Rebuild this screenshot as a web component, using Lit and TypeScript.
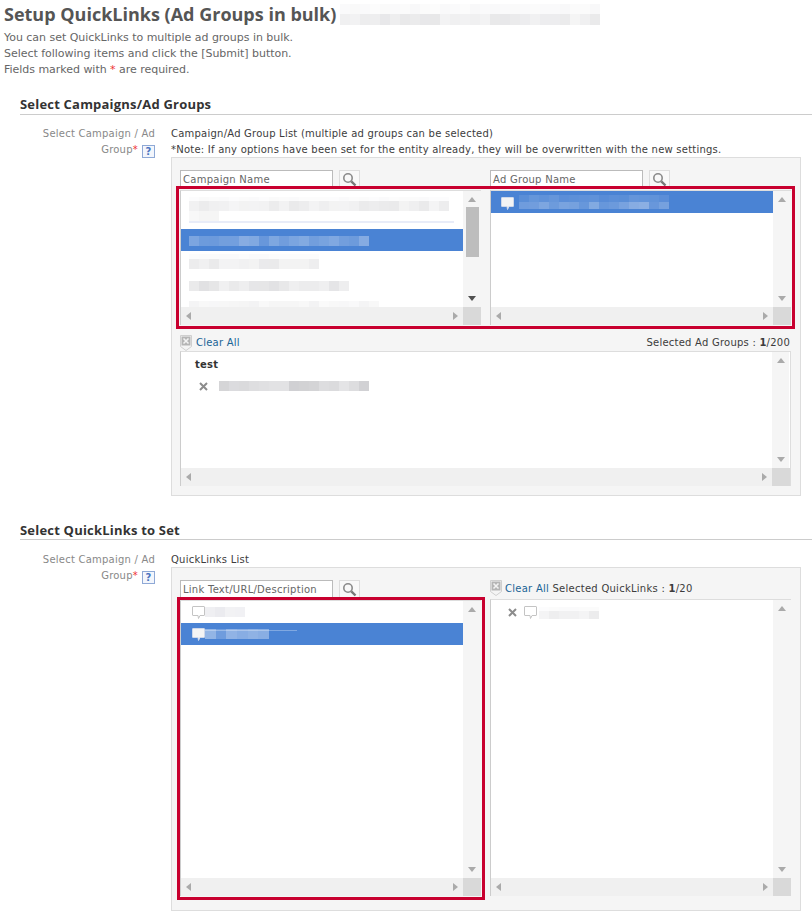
import { LitElement, html, css, svg, TemplateResult } from "lit";
import { customElement } from "lit/decorators.js";

type Row = [cells: number, strength: number, h: number];

function blur(rows: Row[], rgb = "90,90,100", seed = 1, cell = 10): TemplateResult {
  let s = seed * 97 + 13;
  const rnd = () => {
    s = (s * 9301 + 49297) % 233280;
    return s / 233280;
  };
  return html`<div class="blur">
    ${rows.map(
      ([n, k, h]) => html`<div class="blur-row" style="height:${h}px">
        ${Array.from({ length: n }, () => {
          const a = (k * (0.45 + 0.55 * rnd())).toFixed(3);
          return html`<i style="width:${cell}px;background:rgba(${rgb},${a})"></i>`;
        })}
      </div>`
    )}
  </div>`;
}

const WHITE = "255,255,255";

const arrow = (dir: "u" | "d" | "l" | "r", color = "#aaa") => {
  const pts = { u: "0,5 8,5 4,0", d: "0,0 8,0 4,5", l: "5,0 5,8 0,4", r: "0,0 0,8 5,4" }[dir];
  const vertical = dir === "u" || dir === "d";
  return html`<svg class="arrow" width=${vertical ? 8 : 5} height=${vertical ? 5 : 8} viewBox="0 0 ${vertical ? 8 : 5} ${vertical ? 5 : 8}">
    ${svg`<polygon points=${pts} fill=${color}></polygon>`}
  </svg>`;
};

const bubble = (on: boolean) => html`<svg class="bubble" width="13" height="13" viewBox="0 0 13 13">
  <path d="M1 .5h11a.5.5 0 0 1 .5.5v8a.5.5 0 0 1-.5.5H8L6.5 12.5 6 9.500H1a.5.5 0 0 1-.5-.5V1A.5.5 0 0 1 1 .5z"
    fill=${on ? "#f4f4f4" : "#fff"} stroke=${on ? "#cfd8ea" : "#c4c4c4"} stroke-width="1"></path>
</svg>`;

const cross = () => html`<svg class="cross" width="9" height="9" viewBox="0 0 9 9">
  <path d="M1 1l7 7M8 1L1 8" stroke="#8c8c8c" stroke-width="2" fill="none"></path>
</svg>`;

const shieldX = () => html`<svg class="shield" width="12" height="16" viewBox="0 0 12 16">
  <path d="M.5.5h11v11L6 15.500.5 11.500z" fill="#f4f4f4" stroke="#cfcfcf"></path>
  <rect x="1.500" y="1.500" width="9" height="9" fill="#b5b5b5"></rect>
  <path d="M3.500 3.500l5 5M8.500 3.500l-5 5" stroke="#f2f2f2" stroke-width="1.600" fill="none"></path>
</svg>`;

const magnifier = () => html`<svg width="15" height="15" viewBox="0 0 15 15">
  <circle cx="6" cy="6" r="4.200" fill="#f8f8f8" stroke="#8a8a8a" stroke-width="1.600"></circle>
  <path d="M9.300 9.300L13.500 13.500" stroke="#777" stroke-width="2.400" fill="none"></path>
</svg>`;

@customElement("app-root")
export class AppRoot extends LitElement {
  static styles = css`
    :host {
      display: block;
      width: 812px;
      height: 919px;
      overflow: hidden;
      background: #fff;
      font-family: "DejaVu Sans", sans-serif;
      font-size: 10px;
      letter-spacing: 0.23px;
      line-height: 16px;
      color: #3c3c3c;
    }
    h1 {
      margin: 0;
      padding-left: 4px;
      height: 29px;
      display: flex;
      align-items: center;
      gap: 4px;
      font: bold 18px/29px "Open Sans", sans-serif;
      letter-spacing: 0;
      color: #555;
      white-space: nowrap;
    }
    .intro {
      margin: 0;
      padding: 1px 0 0 4px;
      font-size: 11px;
      letter-spacing: -0.03px;
      color: #666;
    }
    .req {
      color: #e33;
    }
    h2 {
      margin: 19px 0 0 20px;
      height: 17px;
      border-bottom: 1px solid #ccc;
      font: bold 13px/15px "Open Sans", sans-serif;
      letter-spacing: 0.2px;
      color: #333;
    }
    h2.second {
      margin-top: 26px;
      padding-top: 1px;
      height: 16px;
    }
    .form-row {
      display: grid;
      grid-template-columns: 135px 630px;
      column-gap: 16px;
      margin: 11px 0 0 20px;
    }
    .form-row.second {
      margin-top: 12px;
    }
    .label {
      text-align: right;
      color: #888;
      padding-left: 10px;
    }
    .help {
      display: inline-flex;
      align-items: center;
      justify-content: center;
      box-sizing: border-box;
      width: 13px;
      height: 13px;
      margin-left: 4px;
      border: 1px solid #8fa9d6;
      background: #f3f6fc;
      color: #4a74c0;
      font: bold 10px/11px "DejaVu Sans", sans-serif;
      letter-spacing: 0;
      vertical-align: -2px;
    }
    .panel {
      position: relative;
      box-sizing: border-box;
      width: 630px;
      margin-top: -1px;
      border: 1px solid #ddd;
      background: #f5f5f5;
      padding: 12px 9px 9px 8px;
    }
    .panel.second {
      padding-bottom: 14px;
    }
    .columns {
      display: grid;
      grid-template-columns: 301px 301px;
      column-gap: 9px;
    }
    .search {
      display: flex;
      gap: 6px;
      height: 17px;
    }
    .search-input {
      box-sizing: border-box;
      width: 153px;
      height: 17px;
      border: 1px solid #bbb;
      border-bottom: none;
      background: #fff;
      padding-left: 2px;
      line-height: 17px;
      letter-spacing: 0.26px;
      color: #666;
      white-space: nowrap;
      overflow: hidden;
    }
    .search-btn {
      box-sizing: border-box;
      width: 21px;
      height: 17px;
      border: 1px solid #ddd;
      border-bottom: none;
      background: #f8f8f8;
      display: flex;
      align-items: center;
      justify-content: center;
    }
    .gap3 {
      margin-top: 3px;
    }
    .listbox {
      box-sizing: border-box;
      display: grid;
      grid-template-columns: 1fr 18px;
      grid-template-rows: 1fr 18px;
      border-top: 1px solid #ddd;
      border-left: 1px solid #ccc;
      background: #fff;
    }
    .h135 {
      height: 135px;
    }
    .h296 {
      height: 296px;
    }
    .h297 {
      height: 297px;
    }
    .list-body {
      overflow: hidden;
      min-width: 0;
      min-height: 0;
    }
    .vsb {
      position: relative;
      background: #f5f5f5;
      display: flex;
      flex-direction: column;
      align-items: center;
      justify-content: space-between;
      padding: 6px 0 6px;
    }
    .thumb {
      position: absolute;
      top: 16px;
      left: 3px;
      width: 13px;
      height: 50px;
      background: #bdbdbd;
    }
    .hsb {
      background: #f0f0f0;
      display: flex;
      align-items: center;
      justify-content: space-between;
      padding: 0 5px 0 5px;
    }
    .corner {
      background: #d9d9d9;
    }
    .item {
      display: flex;
      align-items: flex-start;
      padding-left: 8px;
      box-sizing: border-box;
    }
    .item.sel {
      background: #4a83d4;
      height: 22px;
    }
    .blur {
      display: flex;
      flex-direction: column;
    }
    .blur-row {
      display: flex;
    }
    .blur-row i {
      display: block;
      height: 100%;
    }
    .rule-light {
      height: 2px;
      width: 265px;
      margin-left: 8px;
      background: #e8ecf8;
    }
    .clear-row {
      display: flex;
      align-items: flex-start;
      justify-content: space-between;
      height: 16px;
      margin-top: 10px;
    }
    .clear-left {
      display: flex;
      align-items: flex-start;
      gap: 4px;
    }
    .link {
      color: #1a6496;
    }
    .shield {
      flex: none;
    }
    .count {
      padding-right: 1px;
    }
    .wide {
      width: 611px;
      border-right: 1px solid #ddd;
    }
    .wide .vsb {
      width: 17px;
    }
    .group-name {
      font-weight: bold;
      padding: 5px 0 0 14px;
      color: #333;
    }
    .sel-entry {
      display: flex;
      align-items: center;
      gap: 11px;
      padding: 8px 0 0 18px;
    }
    .ql-head {
      display: flex;
      align-items: flex-start;
      gap: 3px;
      height: 19px;
      line-height: 18px;
      letter-spacing: 0.26px;
    }
    .ql-item {
      display: flex;
      align-items: center;
      height: 22px;
      padding-left: 11px;
    }
    .ql-item.sel {
      background: #4a83d4;
      position: relative;
    }
    .thin {
      position: absolute;
      left: 24px;
      top: 7px;
      width: 92px;
      height: 1px;
      background: rgba(255, 255, 255, 0.3);
    }
    .ql-picked {
      display: flex;
      align-items: center;
      padding: 6px 0 0 17px;
      gap: 7px;
    }
    .mark {
      position: absolute;
      box-sizing: border-box;
      border: 3px solid #c8002f;
      pointer-events: none;
    }
    .mark.a {
      left: 4px;
      top: 28px;
      width: 619px;
      height: 143px;
    }
    .mark.b {
      left: 5px;
      top: 29px;
      width: 308px;
      height: 303px;
    }
  `;

  private scroll(dark = false, thumb = false) {
    return html`<div class="vsb">
      ${arrow("u", "#aaa")}
      ${thumb ? html`<div class="thumb"></div>` : ""}
      ${arrow("d", dark ? "#505050" : "#aaa")}
    </div>`;
  }

  private hbar() {
    return html`<div class="hsb">${arrow("l")}${arrow("r")}</div><div class="corner"></div>`;
  }

  private search(text: string) {
    return html`<div class="search">
      <div class="search-input">${text}</div>
      <div class="search-btn">${magnifier()}</div>
    </div>`;
  }

  render() {
    return html`
      <h1>
        <span>Setup QuickLinks (Ad Groups in bulk)</span>
        ${blur(
          [
            [26, 0.05, 10],
            [26, 0.16, 11],
          ],
          "110,110,120",
          3
        )}
      </h1>
      <p class="intro">
        You can set QuickLinks to multiple ad groups in bulk.<br />
        Select following items and click the [Submit] button.<br />
        Fields marked with <span class="req">*</span> are required.
      </p>

      <h2>Select Campaigns/Ad Groups</h2>
      <div class="form-row">
        <div class="label">Select Campaign / Ad Group<span class="req">*</span><span class="help">?</span></div>
        <div>
          <div>Campaign/Ad Group List (multiple ad groups can be selected)</div>
          <div>*Note: If any options have been set for the entity already, they will be overwritten with the new settings.</div>
          <div class="panel">
            <div class="columns">
              <div>
                ${this.search("Campaign Name")}
                <div class="listbox h135 gap3">
                  <div class="list-body">
                    <div class="item" style="padding-top:6px">
                      ${blur(
                        [
                          [26, 0.03, 4],
                          [26, 0.13, 10],
                          [3, 0.07, 10],
                        ],
                        "90,90,100",
                        5
                      )}
                    </div>
                    <div class="rule-light"></div>
                    <div class="item sel" style="margin-top:6px;padding-top:7px">
                      ${blur([[18, 0.34, 10]], WHITE, 8)}
                    </div>
                    <div class="item" style="padding-top:3px">
                      ${blur(
                        [
                          [13, 0.03, 5],
                          [13, 0.13, 10],
                        ],
                        "90,90,100",
                        11
                      )}
                    </div>
                    <div class="item" style="margin-top:12px">
                      ${blur([[16, 0.18, 10]], "90,90,100", 17)}
                    </div>
                    <div class="item" style="margin-top:10px">
                      ${blur([[19, 0.07, 7]], "90,90,100", 21)}
                    </div>
                  </div>
                  ${this.scroll(true, true)} ${this.hbar()}
                </div>
              </div>
              <div>
                ${this.search("Ad Group Name")}
                <div class="listbox h135 gap3">
                  <div class="list-body">
                    <div class="item sel" style="padding-left:10px;padding-top:4px;gap:5px">
                      <div style="padding-top:2px">${bubble(true)}</div>
                      ${blur(
                        [
                          [15, 0.16, 7],
                          [15, 0.36, 7],
                        ],
                        WHITE,
                        4
                      )}
                    </div>
                  </div>
                  ${this.scroll()} ${this.hbar()}
                </div>
              </div>
            </div>
            <div class="clear-row">
              <div class="clear-left">${shieldX()}<span class="link">Clear All</span></div>
              <div class="count">Selected Ad Groups : <b>1</b>/200</div>
            </div>
            <div class="listbox h135 wide">
              <div class="list-body">
                <div class="group-name">test</div>
                <div class="sel-entry">
                  ${cross()} ${blur([[15, 0.34, 10]], "90,90,100", 9)}
                </div>
              </div>
              ${this.scroll()} ${this.hbar()}
            </div>
            <div class="mark a"></div>
          </div>
        </div>
      </div>

      <h2 class="second">Select QuickLinks to Set</h2>
      <div class="form-row second">
        <div class="label">Select Campaign / Ad Group<span class="req">*</span><span class="help">?</span></div>
        <div>
          <div>QuickLinks List</div>
          <div class="panel second">
            <div class="columns">
              <div>
                ${this.search("Link Text/URL/Description")}
                <div class="listbox h296 gap3">
                  <div class="list-body">
                    <div class="ql-item">
                      ${bubble(false)} ${blur([[4, 0.14, 10]], "90,90,120", 2)}
                    </div>
                    <div class="ql-item sel">
                      ${bubble(true)}
                      ${blur([[6, 0.42, 10]], WHITE, 6, 10.67)}
                      <div class="thin"></div>
                    </div>
                  </div>
                  ${this.scroll()} ${this.hbar()}
                </div>
              </div>
              <div>
                <div class="ql-head">
                  ${shieldX()}
                  <span><span class="link">Clear All</span> Selected QuickLinks : <b>1</b>/20</span>
                </div>
                <div class="listbox h297">
                  <div class="list-body">
                    <div class="ql-picked">
                      ${cross()} ${bubble(false)}
                      <div style="margin-left:-5px">
                        ${blur(
                          [
                            [6, 0.03, 4],
                            [6, 0.13, 8],
                          ],
                          "90,90,100",
                          12
                        )}
                      </div>
                    </div>
                  </div>
                  ${this.scroll()} ${this.hbar()}
                </div>
              </div>
            </div>
            <div class="mark b"></div>
          </div>
        </div>
      </div>
    `;
  }
}
